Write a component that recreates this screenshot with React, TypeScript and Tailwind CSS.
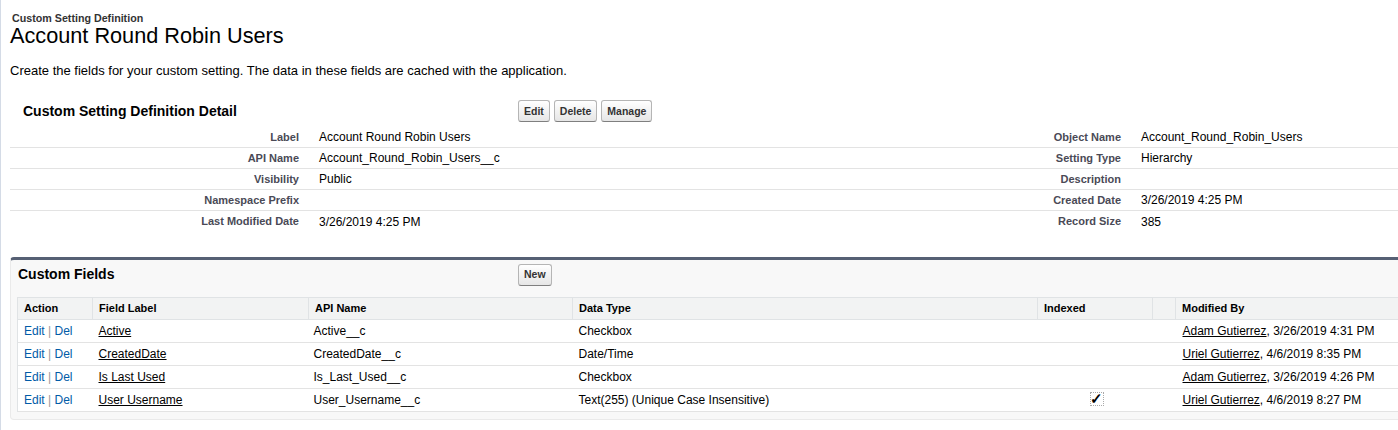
import React from 'react';

const detailRows = [
  ['Label', 'Account Round Robin Users', 'Object Name', 'Account_Round_Robin_Users'],
  ['API Name', 'Account_Round_Robin_Users__c', 'Setting Type', 'Hierarchy'],
  ['Visibility', 'Public', 'Description', ''],
  ['Namespace Prefix', '', 'Created Date', '3/26/2019 4:25 PM'],
  ['Last Modified Date', '3/26/2019 4:25 PM', 'Record Size', '385'],
];

const fields = [
  { label: 'Active', api: 'Active__c', type: 'Checkbox', indexed: false, by: 'Adam Gutierrez', date: '3/26/2019 4:31 PM' },
  { label: 'CreatedDate', api: 'CreatedDate__c', type: 'Date/Time', indexed: false, by: 'Uriel Gutierrez', date: '4/6/2019 8:35 PM' },
  { label: 'Is Last Used', api: 'Is_Last_Used__c', type: 'Checkbox', indexed: false, by: 'Adam Gutierrez', date: '3/26/2019 4:26 PM' },
  { label: 'User Username', api: 'User_Username__c', type: 'Text(255) (Unique Case Insensitive)', indexed: true, by: 'Uriel Gutierrez', date: '4/6/2019 8:27 PM' },
];

function Btn({ children }: { children: React.ReactNode }) {
  return (
    <button className="h-[22px] px-[5px] rounded-[3px] border border-[#b5b5b5] border-b-[#7f7f7f] bg-gradient-to-b from-white to-[#e6e6e6] text-[10.5px] font-bold text-[#333] leading-none">
      {children}
    </button>
  );
}

export default function App() {
  return (
    <div className="w-[1398px] h-[430px] overflow-hidden bg-white font-['Liberation_Sans',Arial,sans-serif] text-black border-l border-[#d4dbe6]">
      <div className="pt-[12px] pl-[11px] text-[10.7px] leading-[12px] font-bold text-[#333]">
        Custom Setting Definition
      </div>
      <h1 className="pl-[9px] text-[21.7px] leading-[24px] text-black">Account Round Robin Users</h1>
      <p className="mt-[15px] pl-[9px] text-[13px] leading-[16px]">
        Create the fields for your custom setting. The data in these fields are cached with the application.
      </p>

      {/* detail block */}
      <div className="mt-[16px] ml-[9px]">
        <div className="flex items-center h-[32px]">
          <h2 className="w-[508px] pl-[13px] text-[14px] font-bold">Custom Setting Definition Detail</h2>
          <div className="flex gap-[4px]">
            <Btn>Edit</Btn>
            <Btn>Delete</Btn>
            <Btn>Manage</Btn>
          </div>
        </div>
        <div>
          {detailRows.map((r, i) => (
            <div
              key={r[0]}
              className={`grid grid-cols-[299px_612px_210px_1fr] h-[21px] items-center ${
                i < detailRows.length - 1 ? 'border-b border-[#e3e3e3]' : ''
              }`}
            >
              <div className="text-right pr-[10px] text-[11px] font-bold text-[#4a4a56]">{r[0]}</div>
              <div className="pl-[10px] text-[12px]">{r[1]}</div>
              <div className="text-right pr-[10px] text-[11px] font-bold text-[#4a4a56]">{r[2]}</div>
              <div className="pl-[10px] text-[12px]">{r[3]}</div>
            </div>
          ))}
        </div>
      </div>

      {/* custom fields */}
      <div className="mt-[25px] ml-[9px] w-[1420px] bg-[#f8f8f8] border border-[#eaeaea] border-t-[3px] border-t-[#566074] rounded-[4px] pb-[7px]">
        <div className="flex items-center h-[29px]">
          <h3 className="w-[507px] pl-[7px] text-[14px] font-bold">Custom Fields</h3>
          <Btn>New</Btn>
        </div>
        <div className="mt-[8px] ml-[6px]">
          <table className="w-[1410px] table-fixed border-collapse text-[12px]">
            <colgroup>
              <col className="w-[75px]" />
              <col className="w-[216px]" />
              <col className="w-[264px]" />
              <col className="w-[465px]" />
              <col className="w-[115px]" />
              <col className="w-[23px]" />
              <col />
            </colgroup>
            <thead>
              <tr className="h-[22px] bg-[#f2f3f3]">
                {['Action', 'Field Label', 'API Name', 'Data Type', 'Indexed', '', 'Modified By'].map((h, i) => (
                  <th
                    key={i}
                    className="border border-[#e0e3e5] px-[6px] text-left text-[11px] font-bold text-black"
                  >
                    {h}
                  </th>
                ))}
              </tr>
            </thead>
            <tbody className="bg-white">
              {fields.map((f) => (
                <tr key={f.api} className="h-[23px] border-b border-[#e3e3e3]">
                  <td className="pl-[6px] border-l border-[#e0e3e5] text-[#015ba7]">
                    Edit <span className="text-[#999]">|</span> Del
                  </td>
                  <td className="px-[6px]">
                    <span className="underline">{f.label}</span>
                  </td>
                  <td className="px-[5px]">{f.api}</td>
                  <td className="px-[6px]">{f.type}</td>
                  <td className="px-[6px]">
                    {f.indexed && (
                      <span className="ml-[46px] inline-flex items-center justify-center w-[14px] h-[14px] border border-dotted border-[#aaa] text-[15px] font-bold leading-none">
                        ✓
                      </span>
                    )}
                  </td>
                  <td></td>
                  <td className="px-[7px]">
                    <span className="underline">{f.by}</span>, {f.date}
                  </td>
                </tr>
              ))}
            </tbody>
          </table>
        </div>
      </div>
    </div>
  );
}
